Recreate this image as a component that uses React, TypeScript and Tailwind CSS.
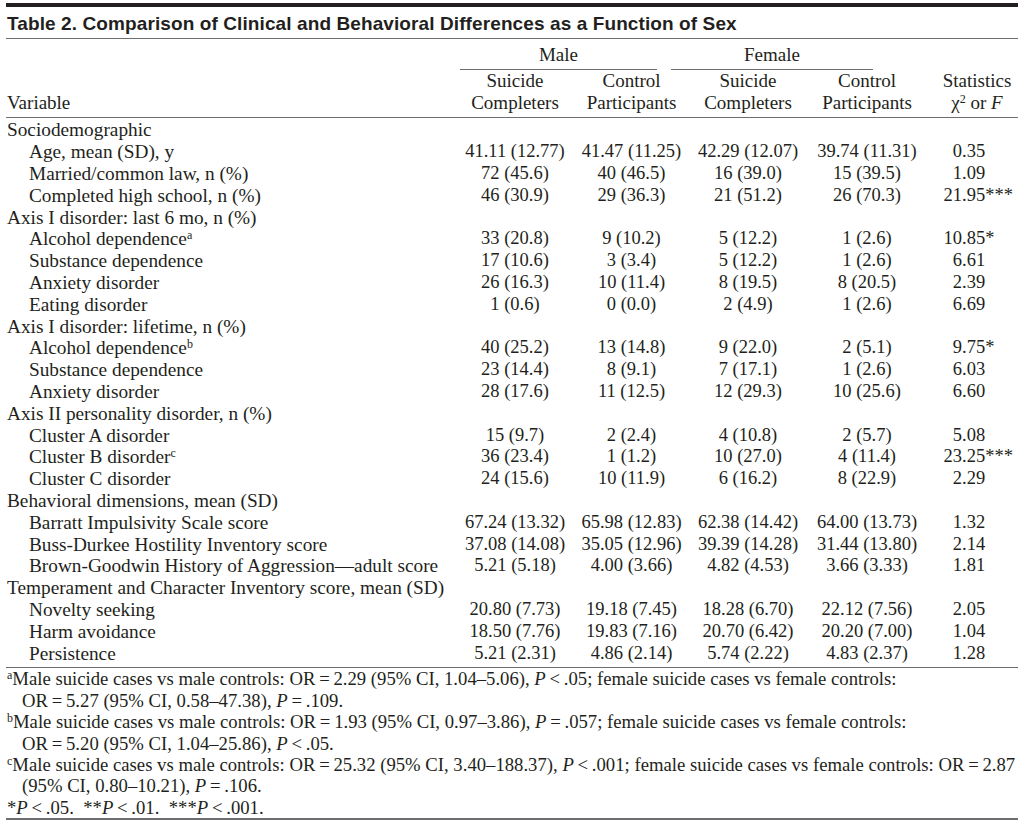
import React from "react";

type Row = {
  label: string;
  sup?: string;
  head?: boolean;
  v?: string[];
  s?: string;
};

const ROWS: Row[] = [
  { label: "Sociodemographic", head: true },
  { label: "Age, mean (SD), y", v: ["41.11 (12.77)", "41.47 (11.25)", "42.29 (12.07)", "39.74 (11.31)"], s: "0.35" },
  { label: "Married/common law, n (%)", v: ["72 (45.6)", "40 (46.5)", "16 (39.0)", "15 (39.5)"], s: "1.09" },
  { label: "Completed high school, n (%)", v: ["46 (30.9)", "29 (36.3)", "21 (51.2)", "26 (70.3)"], s: "21.95***" },
  { label: "Axis I disorder: last 6 mo, n (%)", head: true },
  { label: "Alcohol dependence", sup: "a", v: ["33 (20.8)", "9 (10.2)", "5 (12.2)", "1 (2.6)"], s: "10.85*" },
  { label: "Substance dependence", v: ["17 (10.6)", "3 (3.4)", "5 (12.2)", "1 (2.6)"], s: "6.61" },
  { label: "Anxiety disorder", v: ["26 (16.3)", "10 (11.4)", "8 (19.5)", "8 (20.5)"], s: "2.39" },
  { label: "Eating disorder", v: ["1 (0.6)", "0 (0.0)", "2 (4.9)", "1 (2.6)"], s: "6.69" },
  { label: "Axis I disorder: lifetime, n (%)", head: true },
  { label: "Alcohol dependence", sup: "b", v: ["40 (25.2)", "13 (14.8)", "9 (22.0)", "2 (5.1)"], s: "9.75*" },
  { label: "Substance dependence", v: ["23 (14.4)", "8 (9.1)", "7 (17.1)", "1 (2.6)"], s: "6.03" },
  { label: "Anxiety disorder", v: ["28 (17.6)", "11 (12.5)", "12 (29.3)", "10 (25.6)"], s: "6.60" },
  { label: "Axis II personality disorder, n (%)", head: true },
  { label: "Cluster A disorder", v: ["15 (9.7)", "2 (2.4)", "4 (10.8)", "2 (5.7)"], s: "5.08" },
  { label: "Cluster B disorder", sup: "c", v: ["36 (23.4)", "1 (1.2)", "10 (27.0)", "4 (11.4)"], s: "23.25***" },
  { label: "Cluster C disorder", v: ["24 (15.6)", "10 (11.9)", "6 (16.2)", "8 (22.9)"], s: "2.29" },
  { label: "Behavioral dimensions, mean (SD)", head: true },
  { label: "Barratt Impulsivity Scale score", v: ["67.24 (13.32)", "65.98 (12.83)", "62.38 (14.42)", "64.00 (13.73)"], s: "1.32" },
  { label: "Buss-Durkee Hostility Inventory score", v: ["37.08 (14.08)", "35.05 (12.96)", "39.39 (14.28)", "31.44 (13.80)"], s: "2.14" },
  { label: "Brown-Goodwin History of Aggression\u2014adult score", v: ["5.21 (5.18)", "4.00 (3.66)", "4.82 (4.53)", "3.66 (3.33)"], s: "1.81" },
  { label: "Temperament and Character Inventory score, mean (SD)", head: true },
  { label: "Novelty seeking", v: ["20.80 (7.73)", "19.18 (7.45)", "18.28 (6.70)", "22.12 (7.56)"], s: "2.05" },
  { label: "Harm avoidance", v: ["18.50 (7.76)", "19.83 (7.16)", "20.70 (6.42)", "20.20 (7.00)"], s: "1.04" },
  { label: "Persistence", v: ["5.21 (2.31)", "4.86 (2.14)", "5.74 (2.22)", "4.83 (2.37)"], s: "1.28" },
];

const GRID = "grid grid-cols-[448px_120px_113px_120px_118px_91px]";
const T = "\u2009";

// decimal-aligned statistic
function Stat({ value }: { value: string }) {
  const [int, rest] = value.split(".");
  return (
    <div className="flex whitespace-nowrap">
      <span className="inline-block w-[36px] text-right">{int}</span>
      <span>.{rest}</span>
    </div>
  );
}

function P({ op, val }: { op: string; val: string }) {
  return (
    <>
      <i>P</i>
      {T}
      {op}
      {T}
      {val}
    </>
  );
}

function Note({ mark, first, second }: { mark?: string; first: React.ReactNode; second?: React.ReactNode }) {
  return (
    <div className="whitespace-nowrap">
      <div>
        {mark && <sup className="text-[12px]">{mark}</sup>}
        {first}
      </div>
      {second && <div className="pl-[15px]">{second}</div>}
    </div>
  );
}

export default function App() {
  return (
    <div className="w-[1024px] h-[823px] bg-white text-[#231f20] px-[6px] pt-[3px] font-['Liberation_Serif',serif]">
      <div className="h-[4px] bg-[#231f20]" />
      <div className="mt-[7px] h-[20px] leading-[20px] pl-px font-['Liberation_Sans',sans-serif] font-bold text-[19px] tracking-[0.1px] whitespace-nowrap">
        Table 2. Comparison of Clinical and Behavioral Differences as a Function of Sex
      </div>
      <div className="mt-[4px] h-px bg-[#6d6e71]" />

      {/* column headers */}
      <div className="text-[18.5px] leading-[21.8px] pl-px">
        <div className="flex pt-[5px] text-[19px]">
          <div className="w-[453px]" />
          <div className="w-[197px] text-center pb-[3px] border-b border-[#6d6e71]">Male</div>
          <div className="w-[14px]" />
          <div className="w-[202px] text-center pb-[3px] border-b border-[#6d6e71]">Female</div>
        </div>
        <div className={`${GRID} pb-[4px] border-b border-[#6d6e71] -ml-px pl-px text-[19px]`}>
          <div className="flex items-end">Variable</div>
          <div className="text-center">Suicide<br />Completers</div>
          <div className="text-center">Control<br />Participants</div>
          <div className="text-center">Suicide<br />Completers</div>
          <div className="text-center">Control<br />Participants</div>
          <div className="text-center pl-[11px] whitespace-nowrap">
            Statistics
            <br />
            χ<sup className="text-[12px]">2</sup> or <i>F</i>
          </div>
        </div>

        {/* body */}
        <div className="pt-px pb-[3px] border-b border-[#6d6e71] -ml-px pl-px">
          {ROWS.map((r, i) => (
            <div key={i} className={GRID}>
              <div className={`whitespace-nowrap text-[19.3px] ${r.head ? "" : "pl-[22px]"}`}>
                {r.label}
                {r.sup && <sup className="text-[12px]">{r.sup}</sup>}
              </div>
              {r.v?.map((x, j) => (
                <div key={j} className="text-center whitespace-nowrap">
                  {x}
                </div>
              ))}
              {r.s && <Stat value={r.s} />}
            </div>
          ))}
        </div>
      </div>

      {/* footnotes */}
      <div className="text-[18.7px] leading-[21.4px] pl-px h-[150px]">
        <Note
          mark="a"
          first={
            <>
              Male suicide cases vs male controls: OR{T}={T}2.29 (95% CI, 1.04–5.06), <P op="<" val=".05" />; female suicide cases vs female controls:
            </>
          }
          second={
            <>
              OR{T}={T}5.27 (95% CI, 0.58–47.38), <P op="=" val=".109" />.
            </>
          }
        />
        <Note
          mark="b"
          first={
            <>
              Male suicide cases vs male controls: OR{T}={T}1.93 (95% CI, 0.97–3.86), <P op="=" val=".057" />; female suicide cases vs female controls:
            </>
          }
          second={
            <>
              OR{T}={T}5.20 (95% CI, 1.04–25.86), <P op="<" val=".05" />.
            </>
          }
        />
        <Note
          mark="c"
          first={
            <>
              Male suicide cases vs male controls: OR{T}={T}25.32 (95% CI, 3.40–188.37), <P op="<" val=".001" />; female suicide cases vs female controls: OR{T}={T}2.87
            </>
          }
          second={
            <>
              (95% CI, 0.80–10.21), <P op="=" val=".106" />.
            </>
          }
        />
        <Note
          first={
            <>
              *<P op="<" val=".05" />.&nbsp; **<P op="<" val=".01" />.&nbsp; ***<P op="<" val=".001" />.
            </>
          }
        />
      </div>
      <div className="h-[2px] bg-[#6d6e71]" />
    </div>
  );
}
